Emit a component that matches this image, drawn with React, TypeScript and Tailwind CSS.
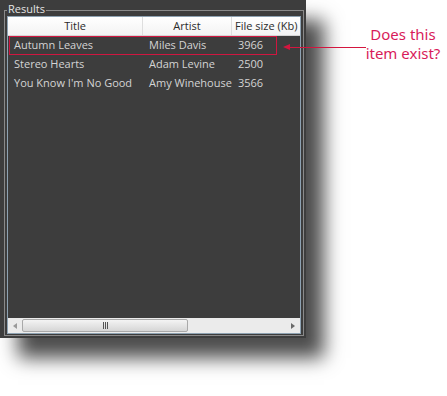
import React from 'react';

interface Song {
  title: string;
  artist: string;
  size: string;
}

const songs: Song[] = [
  { title: 'Autumn Leaves', artist: 'Miles Davis', size: '3966' },
  { title: 'Stereo Hearts', artist: 'Adam Levine', size: '2500' },
  { title: "You Know I'm No Good", artist: 'Amy Winehouse', size: '3566' },
];

function Cells({ song }: { song: Song }) {
  return (
    <>
      <div className="w-[134px] pl-[4px]">{song.title}</div>
      <div className="w-[89px] pl-[5px]">{song.artist}</div>
      <div className="pl-[5px]">{song.size}</div>
    </>
  );
}

export default function App() {
  return (
    <div className="relative w-[447px] h-[396px] bg-white overflow-hidden font-['Open_Sans','Noto_Sans',sans-serif]">
      {/* Window panel */}
      <div className="w-[306px] h-[338px] bg-[#3d3d3d] pt-[10px] pl-[4px] pr-[2px] pb-[2px] shadow-[18px_20px_18px_rgba(0,0,0,0.7)]">
        <div className="relative h-full border border-[#8a8a8a] px-[2px] pt-[5px] pb-[1px]">
          <span className="absolute left-[2px] top-[-9px] bg-[#3d3d3d] px-[1px] text-[11px] leading-[14px] text-[#e4e4e4]">
            Results
          </span>

          {/* List view */}
          <div className="flex h-full flex-col border border-[#8ea2b2] bg-[#3d3d3d]">
            {/* Header */}
            <div className="flex h-[19px] shrink-0 border-b border-[#d5d5d5] bg-gradient-to-b from-white to-[#f3f3f3] text-[11px] leading-[18px] text-[#2b2b2b]">
              <div className="w-[135px] border-r border-[#dedede] text-center">Title</div>
              <div className="w-[89px] border-r border-[#dedede] text-center">Artist</div>
              <div className="flex-1 pl-[3px]">File size (Kb)</div>
            </div>

            {/* Rows */}
            <div className="flex-1 text-[11px] leading-[17px] text-[#d4d4d4]">
              {songs.map((song, i) =>
                i === 0 ? (
                  <div key={song.title} className="h-[19px] py-[1px]">
                    <div className="ml-[2px] flex h-[17px] w-[266px] outline outline-1 outline-[#d01640] leading-[15px]">
                      <Cells song={song} />
                    </div>
                  </div>
                ) : (
                  <div key={song.title} className="flex h-[19px] pl-[2px]">
                    <Cells song={song} />
                  </div>
                )
              )}
            </div>

            {/* Horizontal scrollbar */}
            <div className="flex h-[15px] shrink-0 items-center bg-[#ebebeb]">
              <div className="flex h-full w-[14px] items-center justify-center">
                <span className="block h-0 w-0 border-y-[3px] border-r-[4px] border-y-transparent border-r-[#9a9a9a]" />
              </div>
              <div className="flex h-[13px] w-[166px] items-center justify-center rounded-[2px] border border-[#a9a9a9] bg-gradient-to-b from-[#f4f4f4] to-[#d6d6d6]">
                <span className="flex gap-[1px]">
                  <span className="block h-[7px] w-[1px] bg-[#555]" />
                  <span className="block h-[7px] w-[1px] bg-[#555]" />
                  <span className="block h-[7px] w-[1px] bg-[#555]" />
                </span>
              </div>
              <div className="flex-1" />
              <div className="flex h-full w-[14px] items-center justify-center">
                <span className="block h-0 w-0 border-y-[3px] border-l-[4px] border-y-transparent border-l-[#6a6a6a]" />
              </div>
            </div>
          </div>
        </div>
      </div>

      {/* Callout */}
      <div className="absolute left-[283px] top-[44px] flex items-center">
        <span className="block h-0 w-0 border-y-[3px] border-r-[7px] border-y-transparent border-r-[#d3163f]" />
        <span className="block h-[1px] w-[76px] bg-[#d3163f]" />
      </div>
      <div className="absolute left-[358px] top-[25px] w-[90px] text-center text-[15px] leading-[19px] text-[#d81b5a] font-['Noto_Sans',sans-serif]">
        Does this
        <br />
        item exist?
      </div>
    </div>
  );
}
